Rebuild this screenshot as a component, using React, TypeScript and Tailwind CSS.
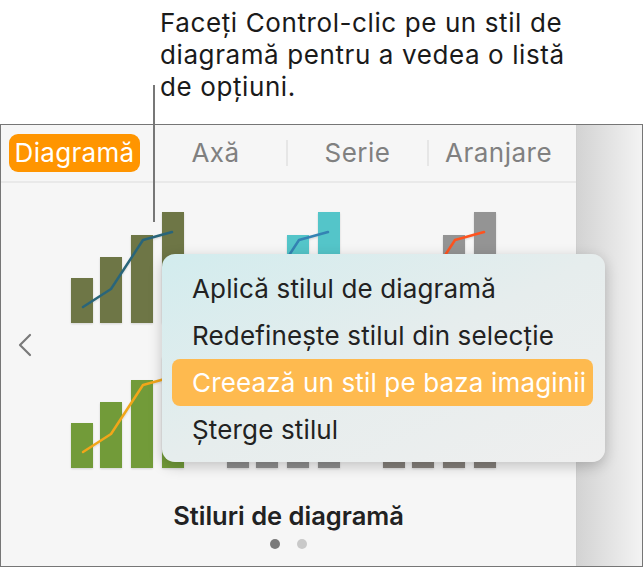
import React from 'react';

type Chart = { bar: string; line?: string };

const ROWS: Chart[][] = [
  [
    { bar: '#67703d', line: '#1f5e74' },
    { bar: '#4cc3c7', line: '#2a7db0' },
    { bar: '#8f8f8f', line: '#ff4b14' },
  ],
  [
    { bar: '#6b972f', line: '#f2a20e' },
    { bar: '#8a8a8a' },
    { bar: '#7f7a75' },
  ],
];

const BARS = [
  { x: 0, h: 45 },
  { x: 29, h: 66 },
  { x: 60, h: 88 },
  { x: 91, h: 111 },
];

const ChartThumb: React.FC<{ chart: Chart }> = ({ chart }) => (
  <svg width="113" height="111" viewBox="0 0 113 111" className="block">
    {BARS.map((b) => (
      <rect key={b.x} x={b.x} y={111 - b.h} width={22} height={b.h} fill={chart.bar} />
    ))}
    {chart.line && (
      <polyline
        points="12,95 40,77 72,28 101,20"
        fill="none"
        stroke={chart.line}
        strokeWidth="2.5"
        strokeLinejoin="round"
        strokeLinecap="round"
      />
    )}
  </svg>
);

const TABS = ['Diagramă', 'Axă', 'Serie', 'Aranjare'];

const MENU = [
  'Aplică stilul de diagramă',
  'Redefinește stilul din selecție',
  'Creează un stil pe baza imaginii',
  'Șterge stilul',
];

export default function App() {
  return (
    <div className="relative h-[567px] w-[644px] overflow-hidden bg-white font-['Inter',sans-serif]">
      {/* callout */}
      <div className="h-[124px] pl-[160px] pt-[7px]">
        <p className="text-[26px] leading-[32px] tracking-[0.6px] text-[#1a1a1a]">
          Faceți Control-clic pe un stil de
          <br />
          diagramă pentru a vedea o listă
          <br />
          de opțiuni.
        </p>
      </div>

      {/* panel */}
      <div className="flex h-[443px] w-[643px] border border-[#767676] bg-[#f6f6f6]">
        <div className="flex w-[575px] flex-col">
          <div className="grid h-[58px] grid-cols-[141px_141px_141px_141px] items-center border-b-2 border-[#e9e9e9] px-[3px]">
            {TABS.map((t, i) =>
              i === 0 ? (
                <div key={t} className="flex justify-center">
                  <span className="flex h-[38px] w-[131px] items-center justify-center rounded-[9px] bg-[#ff9500] text-[26px] leading-[32px] tracking-[0.3px] text-white">
                    {t}
                  </span>
                </div>
              ) : (
                <div
                  key={t}
                  className={`flex h-[26px] items-center justify-center text-[26px] leading-[32px] tracking-[0.5px] text-[#808080] ${
                    i > 1 ? 'border-l-2 border-[#e6e6e6]' : ''
                  }`}
                >
                  {t}
                </div>
              ),
            )}
          </div>

          <div className="flex pt-[29px]">
            <div className="flex w-[70px] items-center pl-[16px] pt-[10px]">
              <svg width="16" height="24" viewBox="0 0 16 24">
                <polyline
                  points="13,2 3,12 13,22"
                  fill="none"
                  stroke="#7a7a7a"
                  strokeWidth="2.2"
                  strokeLinecap="round"
                  strokeLinejoin="round"
                />
              </svg>
            </div>
            <div className="grid grid-cols-[113px_113px_113px] gap-x-[43px] gap-y-[34px]">
              {ROWS.flat().map((c, i) => (
                <div key={i} className="opacity-95 drop-shadow-[0_1px_1px_rgba(0,0,0,0.15)]">
                  <ChartThumb chart={c} />
                </div>
              ))}
            </div>
          </div>

          <div className="mt-[34px] text-center text-[25.5px] font-semibold leading-[28px] text-[#222]">
            Stiluri de diagramă
          </div>
          <div className="mt-[9px] flex justify-center gap-[17px]">
            <span className="h-[10px] w-[10px] rounded-full bg-[#7a7a7a]" />
            <span className="h-[10px] w-[10px] rounded-full bg-[#c9c9c9]" />
          </div>
        </div>
        <div className="flex-1 border-l border-[#cfcfcf] bg-gradient-to-r from-[#d3d3d3] to-[#f3f3f3]" />
      </div>

      {/* callout line */}
      <div className="absolute left-[153px] top-[85px] h-[137px] w-[2px] bg-[#777]" />

      {/* context menu */}
      <div className="absolute left-[162px] top-[254px] w-[443px] rounded-[13px] bg-gradient-to-br from-[#d2ecee] via-[#e6eded] to-[#efefef] pb-[9px] pl-[10px] pr-[12px] pt-[11px] shadow-[0_4px_14px_rgba(0,0,0,0.22)]">
        {MENU.map((m, i) => (
          <div
            key={m}
            className={`flex h-[47px] items-center rounded-[8px] pl-[20px] text-[26px] tracking-[0.15px] ${
              i === 2 ? 'bg-[#feba4f] text-white' : 'text-[#222]'
            }`}
          >
            {m}
          </div>
        ))}
      </div>
    </div>
  );
}
